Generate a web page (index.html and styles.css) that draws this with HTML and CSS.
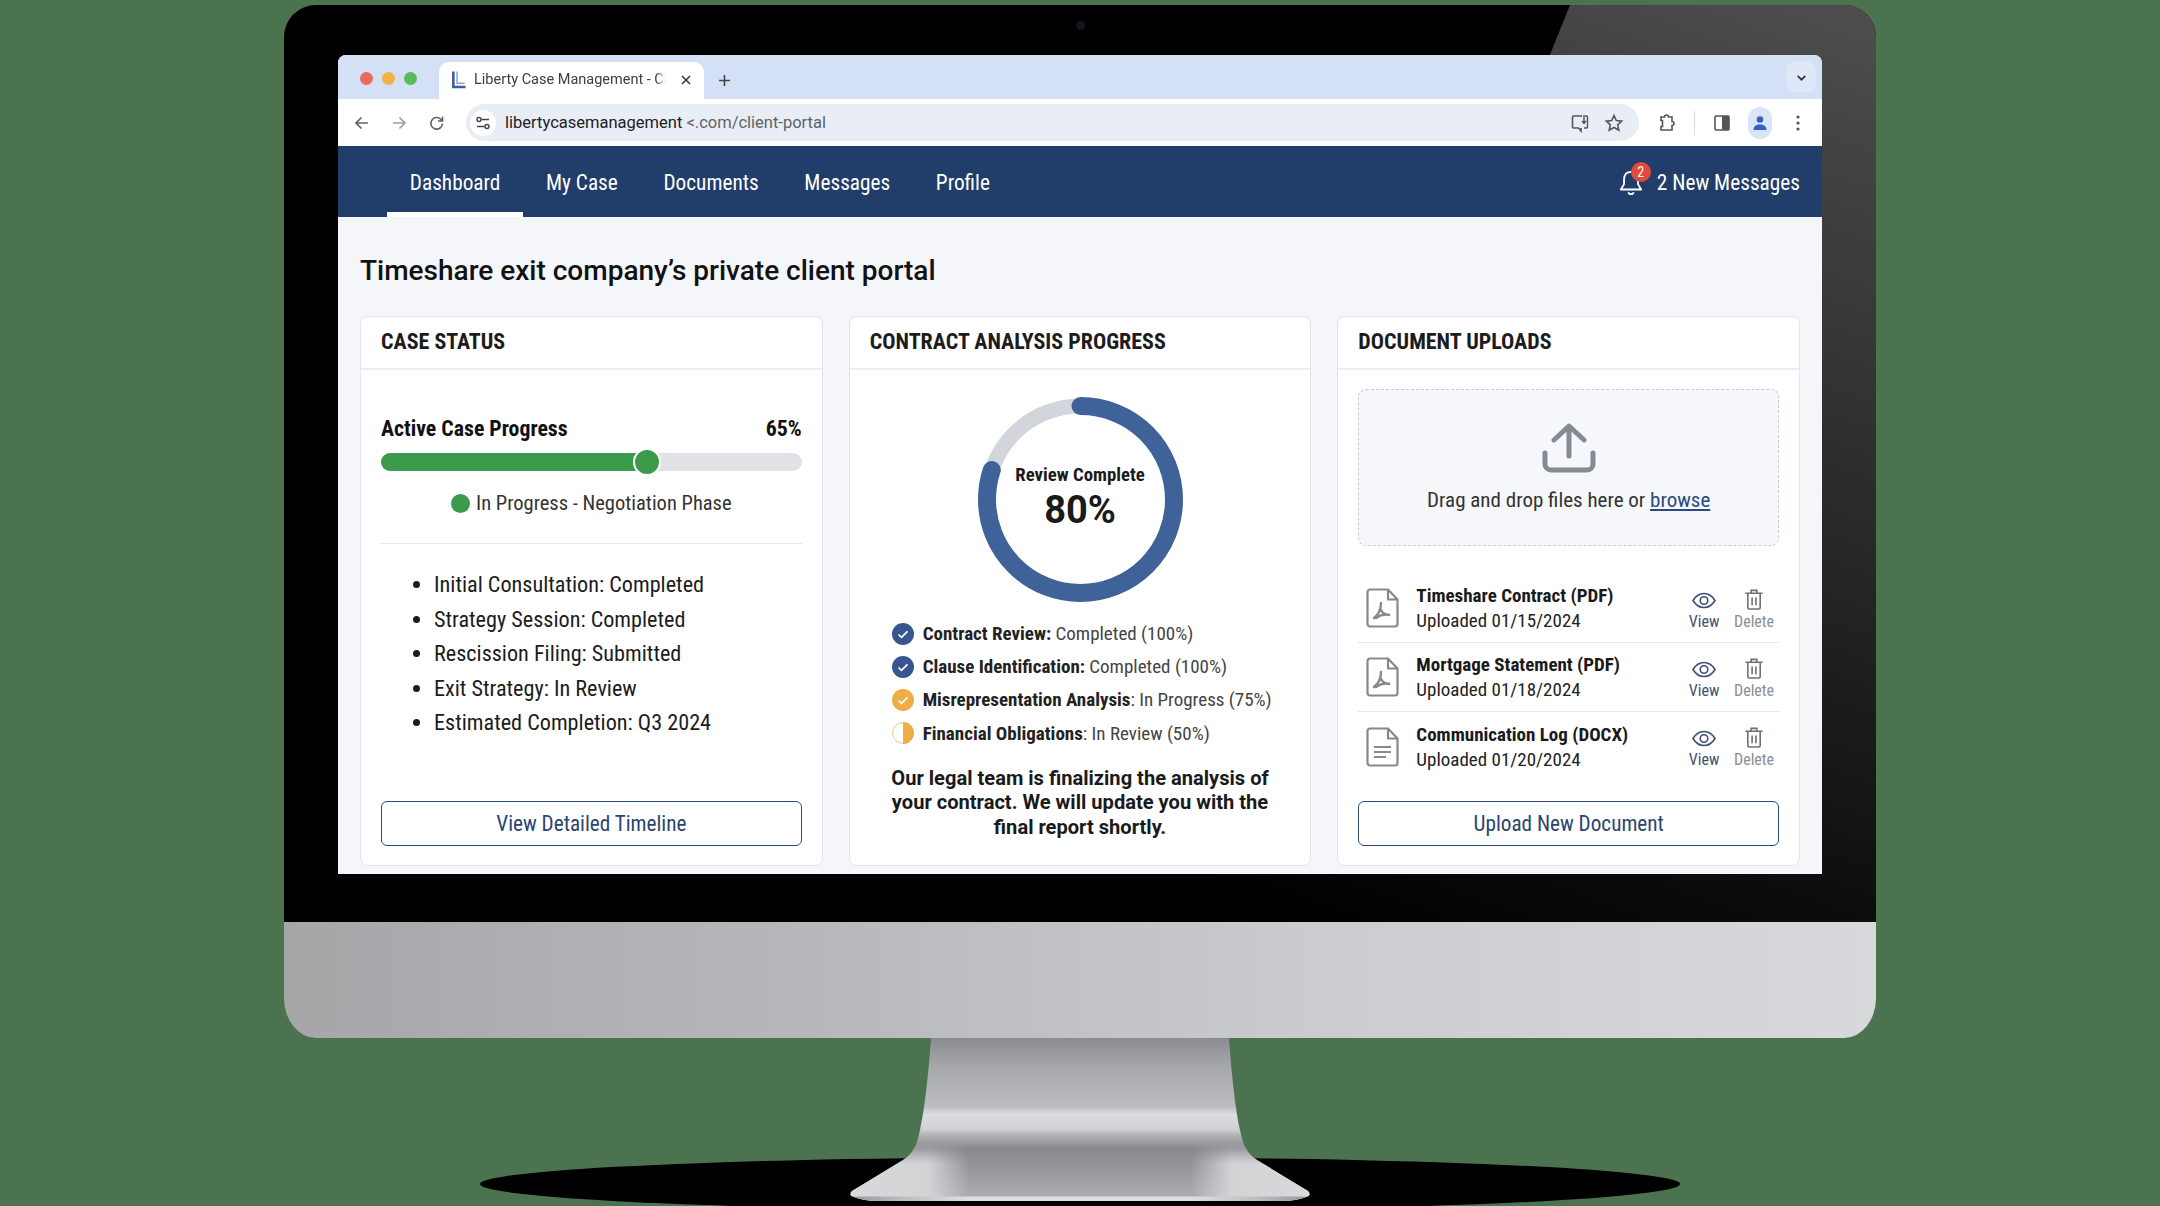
FILE: index.html
```html
<!DOCTYPE html>
<html lang="en">
<head>
<meta charset="utf-8">
<title>Liberty Case Management</title>
<link rel="stylesheet" href="styles.css">
</head>
<body>
<div class="monitor">
  <div class="bezel">
    <span class="camera"></span>
    <div class="screen">
      <div class="tabbar">
        <div class="lights"><i class="light red"></i><i class="light yellow"></i><i class="light green"></i></div>
        <div class="tab">
          <svg class="favicon" viewBox="0 0 16 20"><path d="M2.500 1v16.500h13" fill="none" stroke="#3f5f9f" stroke-width="2.800"/><path d="M6.500 1v12.500h8" fill="none" stroke="#8fa3c8" stroke-width="1.600"/></svg>
          <span class="tab-title">Liberty Case Management - Client Portal</span>
          <svg class="tab-x" viewBox="0 0 12 12"><path d="M2 2l8 8M10 2l-8 8" stroke="#333" stroke-width="1.500"/></svg>
        </div>
        <svg class="tab-plus" viewBox="0 0 12 12"><path d="M6 1v10M1 6h10" stroke="#444" stroke-width="1.500"/></svg>
        <div class="tab-menu"><svg viewBox="0 0 12 12"><path d="M2.500 4.500L6 8l3.500-3.500" fill="none" stroke="#333" stroke-width="1.600"/></svg></div>
      </div>
      <div class="toolbar">
        <svg class="tb-icon back" viewBox="0 0 18 18"><path d="M15 9H3.500M8.500 3.500L3 9l5.500 5.500" fill="none" stroke="#5f6368" stroke-width="1.700"/></svg>
        <svg class="tb-icon fwd" viewBox="0 0 18 18"><path d="M3 9h11.500M9.500 3.500L15 9l-5.500 5.500" fill="none" stroke="#9a9da2" stroke-width="1.700"/></svg>
        <svg class="tb-icon reload" viewBox="0 0 18 18"><path d="M14.500 9.500a5.800 5.800 0 1 1-1.700-4.300L14.500 7M14.500 2.500V7H10" fill="none" stroke="#5f6368" stroke-width="1.600"/></svg>
        <div class="omnibox">
          <span class="site-icon"><svg viewBox="0 0 16 16"><path d="M6.500 4.500H14M2 11.500h7.500" stroke="#444" stroke-width="1.500"/><circle cx="4" cy="4.500" r="2" fill="none" stroke="#444" stroke-width="1.400"/><circle cx="12" cy="11.500" r="2" fill="none" stroke="#444" stroke-width="1.400"/></svg></span>
          <span class="url"><b>libertycasemanagement</b> <em>&lt;.com/client-portal</em></span>
          <svg class="omni-icon" viewBox="0 0 20 20"><path d="M12 3H3.500a1 1 0 0 0-1 1v10a1 1 0 0 0 1 1h5l2.500 3v-3" fill="none" stroke="#555" stroke-width="1.600"/><path d="M15 3h1.500a1 1 0 0 1 1 1v10a1 1 0 0 1-1 1H14M14 2v8M12 8l2 2.500L16 8" fill="none" stroke="#555" stroke-width="1.400"/></svg>
          <svg class="omni-icon star" viewBox="0 0 20 20"><path d="M10 2.500l2.300 5 5.400.6-4 3.700 1.100 5.400L10 14.500l-4.800 2.700 1.100-5.400-4-3.700 5.400-.6z" fill="none" stroke="#555" stroke-width="1.600"/></svg>
        </div>
        <svg class="tb-right puzzle" viewBox="0 0 20 20"><path d="M4 4h3.500a2 2 0 0 1 4 0H15v4.500a2 2 0 0 1 0 4V17H4v-3.500h1.500v-6H4z" fill="none" stroke="#555" stroke-width="1.600"/></svg>
        <i class="tb-sep"></i>
        <svg class="tb-right panel" viewBox="0 0 20 20"><rect x="3" y="3" width="14" height="14" rx="1" fill="none" stroke="#555" stroke-width="1.600"/><rect x="10" y="3" width="7" height="14" fill="#555"/></svg>
        <span class="avatar"><svg viewBox="0 0 20 20"><circle cx="10" cy="6.500" r="3.300" fill="#2f62c4"/><path d="M3.500 17c0-4 3-5.500 6.500-5.500s6.500 1.500 6.500 5.500z" fill="#2f62c4"/></svg></span>
        <svg class="tb-right dots" viewBox="0 0 20 20"><circle cx="10" cy="4" r="1.600" fill="#555"/><circle cx="10" cy="10" r="1.600" fill="#555"/><circle cx="10" cy="16" r="1.600" fill="#555"/></svg>
      </div>
      <nav class="nav">
        <a class="nav-item active">Dashboard</a>
        <a class="nav-item">My Case</a>
        <a class="nav-item">Documents</a>
        <a class="nav-item">Messages</a>
        <a class="nav-item">Profile</a>
        <div class="alerts">
          <span class="bell">
            <svg viewBox="0 0 26 28"><path d="M13 4.500c-4.200 0-6.500 3-6.500 7v4.500L3.500 21h19l-3-5v-4.500c0-4-2.300-7-6.500-7zM10.500 23.500a2.600 2.600 0 0 0 5 0" fill="none" stroke="#fff" stroke-width="1.700" stroke-linejoin="round"/></svg>
            <span class="badge">2</span>
          </span>
          <span>2 New Messages</span>
        </div>
      </nav>
      <main class="main">
        <h1 class="title">Timeshare exit company’s private client portal</h1>
        <div class="cards">
          <section class="card">
            <h2 class="card-head">CASE STATUS</h2>
            <div class="card-body status-body">
              <div class="progress-head"><span>Active Case Progress</span><span>65%</span></div>
              <div class="track"><div class="fill" style="width:65%"><i class="thumb"></i></div></div>
              <div class="phase"><i class="phase-dot"></i>In Progress - Negotiation Phase</div>
              <hr class="divider">
              <ul class="steps">
                <li>Initial Consultation: Completed</li>
                <li>Strategy Session: Completed</li>
                <li>Rescission Filing: Submitted</li>
                <li>Exit Strategy: In Review</li>
                <li>Estimated Completion: Q3 2024</li>
              </ul>
              <a class="btn">View Detailed Timeline</a>
            </div>
          </section>
          <section class="card">
            <h2 class="card-head">CONTRACT ANALYSIS PROGRESS</h2>
            <div class="card-body analysis-body">
              <div class="ring">
                <svg class="ring-svg" viewBox="0 0 205 205">
                  <circle cx="102.500" cy="102.500" r="93.500" fill="none" stroke="#d2d5dc" stroke-width="15"/>
                  <circle cx="102.500" cy="102.500" r="93.500" fill="none" stroke="#3f6298" stroke-width="18" stroke-linecap="round" stroke-dasharray="470 587.500" transform="rotate(-90 102.500 102.500)"/>
                </svg>
                <div class="ring-label"><span class="ring-cap">Review Complete</span><span class="ring-num">80%</span></div>
              </div>
              <ul class="legend">
                <li><svg class="legend-icon" viewBox="0 0 22 22"><circle cx="11" cy="11" r="11" fill="#37568f"/><path d="M6.500 11.500l3 2.800 6-6" fill="none" stroke="#fff" stroke-width="1.700"/></svg><span><b>Contract Review:</b> Completed (100%)</span></li>
                <li><svg class="legend-icon" viewBox="0 0 22 22"><circle cx="11" cy="11" r="11" fill="#37568f"/><path d="M6.500 11.500l3 2.800 6-6" fill="none" stroke="#fff" stroke-width="1.700"/></svg><span><b>Clause Identification:</b> Completed (100%)</span></li>
                <li><svg class="legend-icon" viewBox="0 0 22 22"><circle cx="11" cy="11" r="11" fill="#efae45"/><path d="M6.500 11.500l3 2.800 6-6" fill="none" stroke="#fff" stroke-width="1.700"/></svg><span><b>Misrepresentation Analysis</b>: In Progress (75%)</span></li>
                <li><svg class="legend-icon" viewBox="0 0 22 22"><circle cx="11" cy="11" r="10.400" fill="#fff" stroke="#f3c98a" stroke-width="1"/><path d="M11 0a11 11 0 0 1 0 22z" fill="#efae45"/></svg><span><b>Financial Obligations</b>: In Review (50%)</span></li>
              </ul>
              <p class="note">Our legal team is finalizing the analysis of your contract. We will update you with the final report shortly.</p>
            </div>
          </section>
          <section class="card">
            <h2 class="card-head">DOCUMENT UPLOADS</h2>
            <div class="card-body docs-body">
              <div class="drop">
                <svg class="upload-icon" viewBox="0 0 54 50"><path d="M27 33V4M12 17L27 3l15 14M3 30v11a6 6 0 0 0 6 6h36a6 6 0 0 0 6-6V30" fill="none" stroke="#868a95" stroke-width="5" stroke-linecap="round" stroke-linejoin="round"/></svg>
                <p class="drop-text">Drag and drop files here or <a class="link">browse</a></p>
              </div>
              <ul class="files">
                <li class="file">
                  <svg class="file-icon" viewBox="0 0 33 40"><path d="M4 1.500h18l9.500 10V36a2.500 2.500 0 0 1-2.500 2.500H4A2.500 2.500 0 0 1 1.500 36V4A2.500 2.500 0 0 1 4 1.500zM22 1.500v10h9.500" fill="none" stroke="#868a90" stroke-width="2.200" stroke-linejoin="round"/><path d="M15 15c0 6-3 12-7 15M15 22c2 4 5 5 9 5-4-1-10 0-14 3" fill="none" stroke="#868a90" stroke-width="2.400" stroke-linecap="round"/></svg>
                  <div class="file-info"><b>Timeshare Contract (PDF)</b><span>Uploaded 01/15/2024</span></div>
                  <div class="action view"><svg viewBox="0 0 24 17"><path d="M1 8.500C4 3.500 8 1.500 12 1.500s8 2 11 7c-3 5-7 7-11 7s-8-2-11-7z" fill="none" stroke="#3c5274" stroke-width="1.600"/><circle cx="12" cy="8.500" r="3.800" fill="none" stroke="#3c5274" stroke-width="1.600"/></svg><span>View</span></div>
                  <div class="action del"><svg viewBox="0 0 20 22"><path d="M1 4.500h18M7 4.500V1.500h6v3M3.500 4.500v15a1.500 1.500 0 0 0 1.500 1.500h10a1.500 1.500 0 0 0 1.500-1.500v-15M8 9v8M12 9v8" fill="none" stroke="#6d7178" stroke-width="1.700"/></svg><span>Delete</span></div>
                </li>
                <li class="file">
                  <svg class="file-icon" viewBox="0 0 33 40"><path d="M4 1.500h18l9.500 10V36a2.500 2.500 0 0 1-2.500 2.500H4A2.500 2.500 0 0 1 1.500 36V4A2.500 2.500 0 0 1 4 1.500zM22 1.500v10h9.500" fill="none" stroke="#868a90" stroke-width="2.200" stroke-linejoin="round"/><path d="M15 15c0 6-3 12-7 15M15 22c2 4 5 5 9 5-4-1-10 0-14 3" fill="none" stroke="#868a90" stroke-width="2.400" stroke-linecap="round"/></svg>
                  <div class="file-info"><b>Mortgage Statement (PDF)</b><span>Uploaded 01/18/2024</span></div>
                  <div class="action view"><svg viewBox="0 0 24 17"><path d="M1 8.500C4 3.500 8 1.500 12 1.500s8 2 11 7c-3 5-7 7-11 7s-8-2-11-7z" fill="none" stroke="#3c5274" stroke-width="1.600"/><circle cx="12" cy="8.500" r="3.800" fill="none" stroke="#3c5274" stroke-width="1.600"/></svg><span>View</span></div>
                  <div class="action del"><svg viewBox="0 0 20 22"><path d="M1 4.500h18M7 4.500V1.500h6v3M3.500 4.500v15a1.500 1.500 0 0 0 1.500 1.500h10a1.500 1.500 0 0 0 1.500-1.500v-15M8 9v8M12 9v8" fill="none" stroke="#6d7178" stroke-width="1.700"/></svg><span>Delete</span></div>
                </li>
                <li class="file">
                  <svg class="file-icon" viewBox="0 0 33 40"><path d="M4 1.500h18l9.500 10V36a2.500 2.500 0 0 1-2.500 2.500H4A2.500 2.500 0 0 1 1.500 36V4A2.500 2.500 0 0 1 4 1.500zM22 1.500v10h9.500" fill="none" stroke="#868a90" stroke-width="2.200" stroke-linejoin="round"/><path d="M8 20h17M8 25h17M8 30h12" fill="none" stroke="#868a90" stroke-width="2"/></svg>
                  <div class="file-info"><b>Communication Log (DOCX)</b><span>Uploaded 01/20/2024</span></div>
                  <div class="action view"><svg viewBox="0 0 24 17"><path d="M1 8.500C4 3.500 8 1.500 12 1.500s8 2 11 7c-3 5-7 7-11 7s-8-2-11-7z" fill="none" stroke="#3c5274" stroke-width="1.600"/><circle cx="12" cy="8.500" r="3.800" fill="none" stroke="#3c5274" stroke-width="1.600"/></svg><span>View</span></div>
                  <div class="action del"><svg viewBox="0 0 20 22"><path d="M1 4.500h18M7 4.500V1.500h6v3M3.500 4.500v15a1.500 1.500 0 0 0 1.500 1.500h10a1.500 1.500 0 0 0 1.500-1.500v-15M8 9v8M12 9v8" fill="none" stroke="#6d7178" stroke-width="1.700"/></svg><span>Delete</span></div>
                </li>
              </ul>
              <a class="btn">Upload New Document</a>
            </div>
          </section>
        </div>
      </main>
    </div>
  </div>
  <div class="chin"></div>
  <svg class="stand" viewBox="0 0 1592 168" aria-hidden="true">
    <defs>
      <linearGradient id="neck" x1="0" y1="0" x2="0" y2="1">
        <stop offset="0" stop-color="#8b8c90"/>
        <stop offset="0.195" stop-color="#a9aaad"/>
        <stop offset="0.42" stop-color="#bcbdc0"/>
        <stop offset="0.47" stop-color="#dcdddf"/>
        <stop offset="0.56" stop-color="#d0d1d3"/>
        <stop offset="0.59" stop-color="#b5b6b9"/>
        <stop offset="0.68" stop-color="#88898d"/>
        <stop offset="0.77" stop-color="#929397"/>
        <stop offset="0.95" stop-color="#aaabae"/>
        <stop offset="1" stop-color="#aaabae"/>
      </linearGradient>
      <linearGradient id="side" x1="0" y1="0" x2="1" y2="0">
        <stop offset="0" stop-color="#d8d9db"/>
        <stop offset="0.17" stop-color="#d2d3d5"/>
        <stop offset="0.26" stop-color="#d2d3d5" stop-opacity="0"/>
        <stop offset="0.74" stop-color="#d2d3d5" stop-opacity="0"/>
        <stop offset="0.83" stop-color="#d2d3d5"/>
        <stop offset="1" stop-color="#d8d9db"/>
      </linearGradient>
      <linearGradient id="fade" x1="0" y1="0" x2="0" y2="1">
        <stop offset="0" stop-color="#000"/>
        <stop offset="0.35" stop-color="#fff"/>
      </linearGradient>
      <mask id="side-mask" maskUnits="userSpaceOnUse" x="560" y="105" width="472" height="60">
        <rect x="560" y="105" width="472" height="60" fill="url(#fade)"/>
      </mask>
      <linearGradient id="lip" x1="0" y1="0" x2="1" y2="0">
        <stop offset="0" stop-color="#98999c"/>
        <stop offset="0.12" stop-color="#bfc0c2"/>
        <stop offset="0.25" stop-color="#dcdddf"/>
        <stop offset="0.75" stop-color="#dcdddf"/>
        <stop offset="0.88" stop-color="#bfc0c2"/>
        <stop offset="1" stop-color="#98999c"/>
      </linearGradient>
    </defs>
    <ellipse cx="796" cy="146" rx="600" ry="27" fill="#000"/>
    <path d="M647 0C645 30 641 70 636 92C634 102 631 115 619 122L568 153Q564 157 570 159Q580 163 595 163H997Q1012 163 1022 159Q1028 157 1024 153L973 122C961 115 958 102 956 92C951 70 947 30 945 0Z" fill="url(#neck)"/>
    <path mask="url(#side-mask)" d="M636 92C634 102 631 115 619 122L568 153Q564 157 570 159Q580 163 595 163H997Q1012 163 1022 159Q1028 157 1024 153L973 122C961 115 958 102 956 92Z" fill="url(#side)"/>
    <path d="M569 158.500Q580 163 595 163H997Q1012 163 1023 158.500Z" fill="url(#lip)"/>
  </svg>
</div>
</body>
</html>
```
FILE: styles.css
```css
* { box-sizing: border-box; }
html, body { margin: 0; height: 100%; }
body {
  background: #4c7350;
  overflow: hidden;
  font-family: Roboto, "Liberation Sans", sans-serif;
  font-stretch: 87%;
  color: #1a1a1a;
}
ul { list-style: none; margin: 0; padding: 0; }
p, h1, h2 { margin: 0; }

.monitor { width: 1592px; margin: 5px auto 0; }
.bezel {
  position: relative;
  overflow: hidden;
  background: #000;
  border-radius: 32px 32px 0 0;
  padding: 50px 54px 48px;
}
.bezel::before {
  content: "";
  position: absolute;
  inset: 0;
  clip-path: polygon(1286px 0, 100% 0, 100% 100%, 916px 100%);
  background: linear-gradient(200deg, #4e4e4e 0%, #343434 25%, #0c0c0c 62%, #000 75%);
}
.camera {
  position: absolute;
  left: 792px;
  top: 16px;
  width: 9px;
  height: 9px;
  border-radius: 50%;
  background: #15151f;
}
.screen {
  position: relative;
  display: flex;
  flex-direction: column;
  height: 819px;
  overflow: hidden;
  border-radius: 8px 8px 0 0;
  background: #f4f6f9;
}
.chin {
  height: 116px;
  border-radius: 0 0 32px 32px / 0 0 40px 40px;
  background: linear-gradient(90deg, #a6a6a9 0%, #b8b9bc 35%, #cbccd0 65%, #d8d9db 100%);
}
.stand { display: block; width: 1592px; height: 168px; overflow: visible; }

/* browser chrome */
.tabbar {
  display: flex;
  align-items: flex-end;
  height: 44px;
  flex: none;
  background: #d4e0f6;
  padding-left: 22px;
}
.lights { display: flex; gap: 9px; align-self: center; padding-top: 3px; width: 79px; }
.light { width: 13px; height: 13px; border-radius: 50%; }
.red { background: #ed6a5e; }
.yellow { background: #f4b13f; }
.green { background: #57bd58; }
.tab {
  display: flex;
  align-items: center;
  width: 265px;
  height: 37px;
  background: #fff;
  border-radius: 10px 10px 0 0;
  padding: 0 12px 2px 12px;
  font-size: 14.500px;
  font-stretch: 90%;
  color: #3c4043;
}
.favicon { width: 15px; height: 20px; flex: none; margin-right: 8px; }
.tab-title {
  flex: 1;
  overflow: hidden;
  white-space: nowrap;
  -webkit-mask-image: linear-gradient(90deg, #000 95%, transparent 100%);
  mask-image: linear-gradient(90deg, #000 95%, transparent 100%);
}
.tab-x { width: 12px; height: 12px; flex: none; margin-left: 14px; }
.tab-plus { width: 13px; height: 13px; margin: 0 0 12px 14px; }
.tab-menu {
  display: flex;
  align-items: center;
  justify-content: center;
  width: 30px;
  height: 30px;
  margin: 0 6px 7px auto;
  border-radius: 8px;
  background: #dfe8f8;
}
.tab-menu svg { width: 13px; height: 13px; }
.toolbar {
  display: flex;
  align-items: center;
  height: 47px;
  flex: none;
  background: #fff;
  padding: 0 14px 0 15px;
}
.tb-icon { width: 18px; height: 18px; flex: none; margin-right: 19px; }
.fwd { margin-right: 20px; }
.reload { margin-right: 20px; }
.omnibox {
  display: flex;
  align-items: center;
  width: 1173px;
  height: 37px;
  flex: none;
  background: #e9edf6;
  border-radius: 19px;
  padding: 0 15px 0 4px;
  font-size: 16.500px;
  font-stretch: 90%;
}
.site-icon {
  display: flex;
  align-items: center;
  justify-content: center;
  width: 26px;
  height: 26px;
  border-radius: 50%;
  background: #fff;
  margin-right: 9px;
}
.site-icon svg { width: 16px; height: 16px; }
.url { flex: 1; white-space: nowrap; }
.url b { font-weight: 400; color: #202124; }
.url em { font-style: normal; color: #5f6368; }
.omni-icon { width: 20px; height: 20px; margin-left: 14px; }
.tb-right { width: 20px; height: 20px; flex: none; }
.puzzle { margin-left: 18px; }
.tb-sep { width: 1px; height: 24px; background: #d8dade; margin: 0 17px 0 17px; }
.avatar {
  display: flex;
  align-items: center;
  justify-content: center;
  width: 24px;
  height: 32px;
  margin: 0 16px 0 16px;
  border-radius: 12px;
  background: #dbe5f8;
}
.avatar svg { width: 20px; height: 20px; }

/* site nav */
.nav {
  display: flex;
  align-items: stretch;
  height: 71px;
  flex: none;
  background: #213d69;
  padding: 0 22px 0 49px;
  color: #fff;
  font-size: 21.300px;
}
.nav-item {
  display: flex;
  align-items: center;
  padding: 1px 22.800px 0;
  border-bottom: 5px solid transparent;
  border-top: 5px solid transparent;
}
.nav-item.active { border-bottom-color: #fff; }
.alerts { display: flex; align-items: center; gap: 11px; margin-left: auto; padding-top: 1px; }
.bell { position: relative; display: block; width: 30px; height: 30px; }
.bell svg { width: 30px; height: 30px; display: block; }
.badge {
  position: absolute;
  left: 15px;
  top: -5px;
  width: 20px;
  height: 20px;
  border-radius: 50%;
  background: #e14a3c;
  color: #fff;
  font-size: 14px;
  line-height: 20px;
  text-align: center;
}

/* content */
.main {
  display: flex;
  flex-direction: column;
  flex: 1;
  min-height: 0;
  padding: 0 22px 8px;
}
.title {
  font-size: 28px;
  font-stretch: 90%;
  font-weight: 500;
  line-height: 40px;
  margin: 34px 0 25px;
  color: #111;
}
.cards { display: flex; gap: 26px; flex: 1; min-height: 0; }
.card {
  display: flex;
  flex-direction: column;
  flex: 1 1 0;
  min-width: 0;
  background: #fff;
  border: 1px solid #e3e5e9;
  border-radius: 8px;
}
.card-head {
  font-size: 22px;
  font-weight: 700;
  line-height: 50px;
  height: 53px;
  flex: none;
  padding-left: 20px;
  border-bottom: 2px solid #eceef1;
  color: #1c1c1c;
}
.card-body { display: flex; flex-direction: column; flex: 1; min-height: 0; padding: 0 20px 19px; }
.btn {
  display: flex;
  align-items: center;
  justify-content: center;
  height: 45px;
  flex: none;
  margin-top: auto;
  border: 1.500px solid #2f4b73;
  border-radius: 6px;
  background: #fff;
  color: #2a4570;
  font-size: 21.200px;
}

/* case status */
.status-body { padding-top: 46px; }
.progress-head {
  display: flex;
  justify-content: space-between;
  font-size: 21.800px;
  font-weight: 700;
  line-height: 26px;
  color: #111;
}
.track { height: 18px; margin-top: 11px; border-radius: 9px; background: #e0e2e6; }
.fill { position: relative; height: 100%; border-radius: 9px; background: #3c9b4a; }
.thumb {
  position: absolute;
  right: -7px;
  top: -5px;
  width: 28px;
  height: 28px;
  border: 2px solid #fff;
  border-radius: 50%;
  background: #3c9b4a;
}
.phase {
  display: flex;
  align-items: center;
  justify-content: center;
  gap: 6px;
  margin-top: 19px;
  font-size: 20.500px;
  line-height: 26px;
  color: #333;
}
.phase-dot { width: 19px; height: 19px; border-radius: 50%; background: #3c9b4a; }
.divider { width: 100%; height: 1px; margin: 27px 0 0; border: 0; background: #e5e7eb; }
.steps {
  list-style: disc;
  margin-top: 23px;
  padding-left: 53px;
  font-size: 22.200px;
  line-height: 34.500px;
  color: #1c1c1c;
}

/* analysis */
.analysis-body { padding: 27px 20px 0; }
.ring { display: grid; align-self: center; width: 205px; height: 205px; flex: none; }
.ring-svg { grid-area: 1 / 1; width: 205px; height: 205px; }
.ring-label {
  grid-area: 1 / 1;
  display: flex;
  flex-direction: column;
  align-items: center;
  justify-content: center;
  padding-bottom: 4px;
}
.ring-cap { font-size: 18.800px; font-weight: 700; line-height: 24px; color: #1a1a1a; }
.ring-num { font-size: 38px; font-stretch: 90%; font-weight: 700; line-height: 46px; color: #1a1a1a; }
.legend { margin-top: 15px; padding-left: 22px; font-size: 19px; color: #444; }
.legend li { display: flex; align-items: center; gap: 9px; height: 33.200px; white-space: nowrap; }
.legend b { font-weight: 700; color: #222; }
.legend-icon { width: 22px; height: 22px; flex: none; }
.note {
  margin-top: 16px;
  font-size: 20.100px;
  font-stretch: 90%;
  font-weight: 700;
  line-height: 24.700px;
  text-align: center;
  color: #1a1a1a;
}

/* documents */
.docs-body { padding-top: 19px; }
.drop {
  display: flex;
  flex-direction: column;
  align-items: center;
  height: 157px;
  flex: none;
  padding-top: 33px;
  border: 1.500px dashed #c9ccd2;
  border-radius: 8px;
  background: #f5f7fa;
}
.upload-icon { width: 54px; height: 50px; }
.drop-text { margin-top: 14px; font-size: 21px; line-height: 26px; color: #333; }
.link { color: #2c4a7c; text-decoration: underline; }
.files { margin-top: 28px; }
.file {
  display: flex;
  align-items: center;
  height: 69px;
  padding: 0 5px 0 8px;
  border-bottom: 1px solid #e5e7eb;
}
.file:last-child { border-bottom: 0; }
.file-icon { width: 33px; height: 40px; flex: none; margin-right: 17px; }
.file-info { display: flex; flex-direction: column; flex: 1; font-size: 19px; line-height: 25px; color: #222; }
.file-info b { font-weight: 700; color: #1a1a1a; }
.action { display: flex; flex-direction: column; align-items: center; gap: 3px; padding-top: 3px; font-size: 16px; line-height: 18px; }
.action.view { width: 30px; margin-right: 15px; color: #3c5274; }
.action.del { width: 40px; color: #8a8e95; }
.view svg { width: 24px; height: 17px; margin: 3px 0 1px; }
.del svg { width: 20px; height: 21px; }
```
